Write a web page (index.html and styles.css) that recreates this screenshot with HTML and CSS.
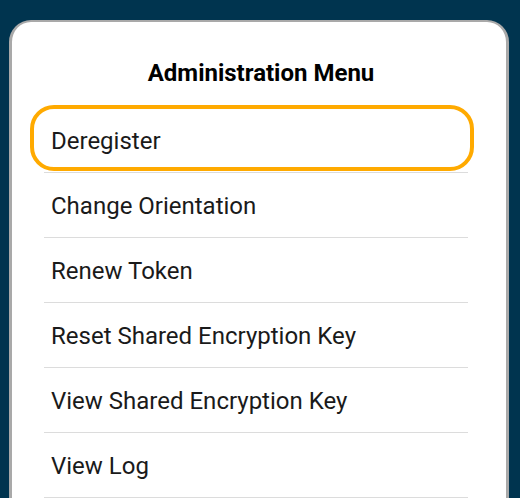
FILE: index.html
```html
<!DOCTYPE html>
<html>
<head>
<meta charset="utf-8">
<link rel="stylesheet" href="styles.css">
</head>
<body>
<div class="card">
  <h1 class="title">Administration Menu</h1>
  <ul class="menu">
    <li class="item focused">Deregister</li>
    <li class="item">Change Orientation</li>
    <li class="item">Renew Token</li>
    <li class="item">Reset Shared Encryption Key</li>
    <li class="item">View Shared Encryption Key</li>
    <li class="item">View Log</li>
  </ul>
</div>
</body>
</html>
```
FILE: styles.css
```css
html, body {
  margin: 0;
  padding: 0;
  background: #00344f;
  height: 100%;
  overflow: hidden;
}
body {
  padding: 20px 0 0 9px;
  box-sizing: border-box;
  font-family: Roboto, "Noto Sans", sans-serif;
}
.card {
  width: 500px;
  height: 560px;
  box-sizing: border-box;
  background: #ffffff;
  border: 3px solid #a9a9a9;
  border-top-width: 2px;
  border-radius: 22px 22px 0 0;
}
.title {
  margin: 0;
  padding: 36px 0 0 4px;
  height: 50px;
  text-align: center;
  font-size: 24px;
  font-weight: 700;
  color: #000000;
  line-height: 30px;
  box-sizing: content-box;
}
.menu {
  list-style: none;
  margin: 0 0 0 32px;
  padding: 0;
  width: 424px;
}
.item {
  position: relative;
  height: 62px;
  padding-top: 2px;
  border-bottom: 1px solid #dcdcdc;
  display: flex;
  align-items: center;
  padding-left: 7px;
  font-size: 24px;
  color: #1a1a1a;
}
.focused::before {
  content: "";
  position: absolute;
  left: -14px;
  right: -6px;
  top: -3px;
  bottom: 1px;
  border: 4px solid #ffaa00;
  border-radius: 24px;
}
```
